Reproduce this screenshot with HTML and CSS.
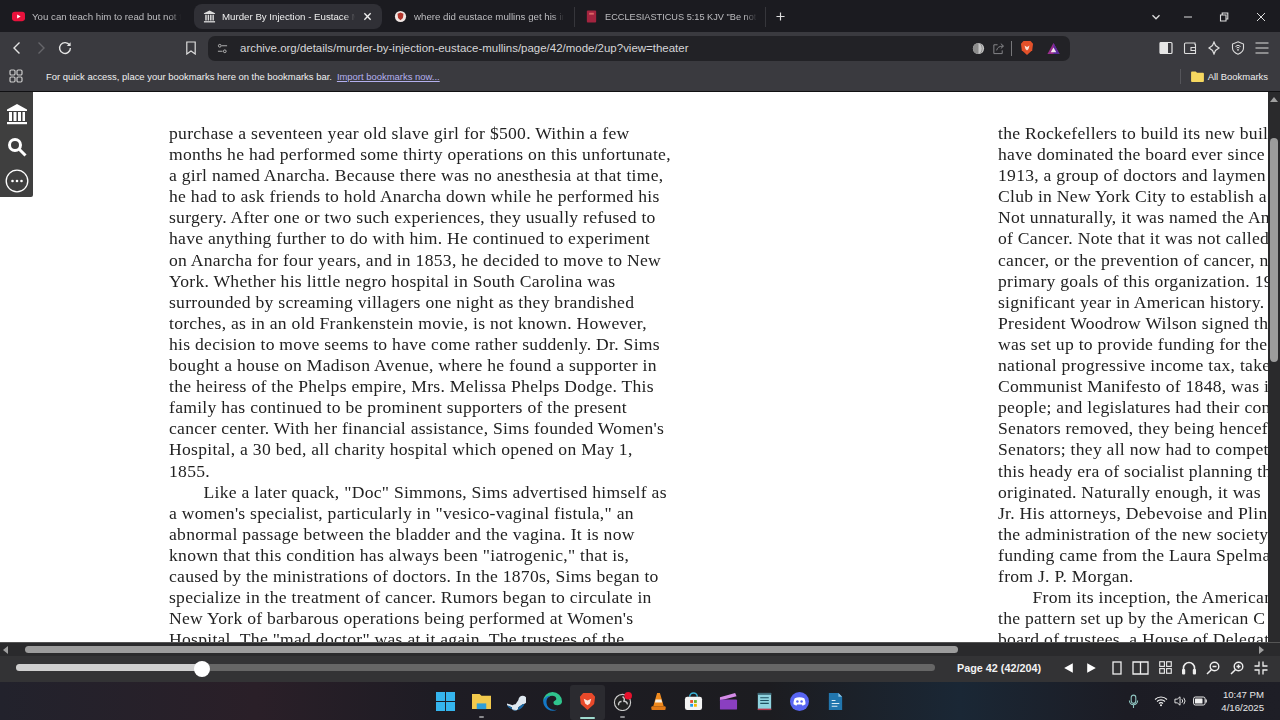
FILE: index.html
```html
<!DOCTYPE html>
<html lang="en">
<head>
<meta charset="utf-8">
<title>Murder By Injection - Eustace Mullins</title>
<link rel="stylesheet" href="styles.css">
</head>
<body>
<div class="tabstrip">
  <div class="tab tab-yt">
    <svg class="fav" viewBox="0 0 14 14"><rect x="0" y="2" width="14" height="10" rx="3" fill="#e8123c"/><path d="M5.5 4.8v4.4L9.3 7z" fill="#fff"/></svg>
    <span class="tab-title">You can teach him to read but not t</span>
  </div>
  <div class="tab tab-active">
    <svg class="fav" viewBox="0 0 14 14"><rect x="1" y="12" width="12" height="1.4" fill="#ddd"/><path d="M1 3.4 7 .6l6 2.8v1H1z" fill="#ddd"/><path d="M2.4 5h1.6v6.4H2.4zM5 5h1.6v6.4H5zM7.6 5h1.6v6.4H7.6zM10.2 5h1.5v6.4h-1.5z" fill="#ddd"/></svg>
    <span class="tab-title">Murder By Injection - Eustace M</span>
    <svg class="tab-close" viewBox="0 0 10 10"><path d="M1.5 1.5l7 7M8.5 1.5l-7 7" stroke="#eee" stroke-width="1.5"/></svg>
  </div>
  <div class="tab tab-leo">
    <svg class="fav" viewBox="0 0 14 14"><circle cx="7" cy="7" r="6" fill="#f1e7e4"/><path d="M7 2.6 10.2 4 9.6 8.6 7 11 4.4 8.6 3.8 4z" fill="#b3362c"/></svg>
    <span class="tab-title">where did eustace mullins get his in</span>
  </div>
  <div class="tab tab-bible">
    <svg class="fav" viewBox="0 0 14 14"><rect x="2" y="0.5" width="10" height="13" rx="1" fill="#a3243f"/><rect x="4.5" y="3" width="5" height="2" fill="#d66"/></svg>
    <span class="tab-title">ECCLESIASTICUS 5:15 KJV "Be not ig</span>
  </div>
  <svg class="new-tab" viewBox="0 0 10 10"><path d="M5 .5v9M.5 5h9" stroke="#ddd" stroke-width="1.3"/></svg>
  <div class="window-controls">
    <svg class="wc wc-chev" viewBox="0 0 10 10"><path d="M1.5 3.2 5 6.8l3.5-3.6" fill="none" stroke="#ddd" stroke-width="1.3"/></svg>
    <svg class="wc wc-min" viewBox="0 0 10 10"><path d="M1 5h8" stroke="#ddd" stroke-width="1"/></svg>
    <svg class="wc wc-max" viewBox="0 0 10 10"><path d="M1.5 3h5.5v6H1.5zM3.2 3V1h5.6v6H7" fill="none" stroke="#ddd" stroke-width="1.1"/></svg>
    <svg class="wc wc-x" viewBox="0 0 10 10"><path d="M1 1l8 8M9 1l-8 8" stroke="#ddd" stroke-width="1"/></svg>
  </div>
</div>

<div class="toolbar">
  <svg class="nav nav-back" viewBox="0 0 14 14"><path d="M9.5 1.5 4 7l5.5 5.5" fill="none" stroke="#e4e4e4" stroke-width="1.4"/></svg>
  <svg class="nav nav-fwd" viewBox="0 0 14 14"><path d="M4.5 1.5 10 7l-5.5 5.5" fill="none" stroke="#66666a" stroke-width="1.4"/></svg>
  <svg class="nav nav-reload" viewBox="0 0 14 14"><path d="M11.6 4.2A5.4 5.4 0 1 0 12.4 7" fill="none" stroke="#e4e4e4" stroke-width="1.4"/><path d="M12.6 1.2v3.9H8.8z" fill="#e4e4e4"/></svg>
  <svg class="nav nav-mark" viewBox="0 0 14 14"><path d="M2.8 1h8.4v12L7 10 2.8 13z" fill="none" stroke="#ddd" stroke-width="1.2"/></svg>
  <div class="urlbar">
    <svg class="tune" viewBox="0 0 12 12"><circle cx="3" cy="3" r="1.5" fill="none" stroke="#bbb"/><path d="M5 3h6M1 9h5" stroke="#bbb"/><circle cx="8.5" cy="9" r="1.5" fill="none" stroke="#bbb"/></svg>
    <span class="url">archive.org/details/murder-by-injection-eustace-mullins/page/42/mode/2up?view=theater</span>
    <svg class="u-ic u-globe" viewBox="0 0 14 14"><circle cx="7" cy="7" r="6" fill="#c6c6c6"/><path d="M7 1a6 6 0 0 0 0 12" fill="#8c8c8c"/><path d="M9 1.6a9 9 0 0 1 0 10.8" fill="none" stroke="#777" stroke-width=".8"/></svg>
    <svg class="u-ic u-share" viewBox="0 0 14 14"><path d="M6 3H2v9.500h9V9M5 9c.5-3 3-4.600 7-4.600M9.500 1.800 12.400 4.400 9.500 7" fill="none" stroke="#8d8d90" stroke-width="1"/></svg>
    <span class="u-div"></span>
    <svg class="u-ic u-brave" viewBox="0 0 14 16"><path d="M3.500 1h7l2.500 2.800-.8 6.400L7 15 1.800 10.200 1 3.800z" fill="#e2512a"/><path d="M4.500 5.500 7 7l2.500-1.500L8.500 9 7 10.500 5.500 9z" fill="#fbe2d6"/></svg>
    <svg class="u-ic u-rewards" viewBox="0 0 14 14"><path d="M7 1l6.500 12H.5z" fill="#9a2c8e"/><path d="M7 1l6.500 12H7z" fill="#5a2a9c"/><path d="M7 6l3 5H4z" fill="#f2e6ee"/></svg>
  </div>
  <svg class="tb-ic tb-side" viewBox="0 0 14 14"><rect x="1" y="1.500" width="12" height="11" rx="1" fill="none" stroke="#e6e6e6" stroke-width="1.2"/><rect x="1" y="1.500" width="8" height="11" fill="#e6e6e6"/></svg>
  <svg class="tb-ic tb-wallet" viewBox="0 0 14 14"><path d="M12 3.500V2H2.500A1 1 0 0 0 1.500 3v8.500a1 1 0 0 0 1 1h10v-9zM8 6.500h4.500v3H8z" fill="none" stroke="#ddd" stroke-width="1.100"/></svg>
  <svg class="tb-ic tb-leo" viewBox="0 0 14 14"><path d="M7 1l1.500 3.500L12 7 8.500 9.500 7 13 5.500 9.500 2 7l3.500-2.500z" fill="none" stroke="#ddd" stroke-width="1.200"/></svg>
  <svg class="tb-ic tb-vpn" viewBox="0 0 14 14"><path d="M7 .8 12.500 3v4c0 3-2.500 5-5.500 6.200C4 12 1.500 10 1.500 7V3z" fill="none" stroke="#ddd" stroke-width="1.100"/><path d="M4.500 5.500a3.500 3.500 0 0 1 5 0M5.600 7a2 2 0 0 1 2.800 0" fill="none" stroke="#ddd"/><circle cx="7" cy="8.800" r=".9" fill="#ddd"/></svg>
  <svg class="tb-ic tb-menu" viewBox="0 0 14 14"><path d="M.5 2h13M.5 7h13M.5 12h13" stroke="#ddd" stroke-width="1.100"/></svg>
</div>

<div class="bookmarks">
  <svg class="apps" viewBox="0 0 14 14"><g fill="none" stroke="#ccc" stroke-width="1.200"><rect x="1" y="1" width="5" height="5" rx="1.200"/><rect x="8" y="1" width="5" height="5" rx="1.200"/><rect x="1" y="8" width="5" height="5" rx="1.200"/><rect x="8" y="8" width="5" height="5" rx="1.200"/></g></svg>
  <span class="bm-text">For quick access, place your bookmarks here on the bookmarks bar.</span>
  <a class="bm-link">Import bookmarks now...</a>
  <span class="bm-div"></span>
  <svg class="folder" viewBox="0 0 14 12"><path d="M0 1.500A1 1 0 0 1 1 .5h4l1.500 1.500H13a1 1 0 0 1 1 1V11a1 1 0 0 1-1 1H1a1 1 0 0 1-1-1z" fill="#f6d860"/></svg>
  <span class="bm-all">All Bookmarks</span>
</div>

<main class="viewer">
  <div class="spread">
    <div class="page">
      <div class="ln">purchase a seventeen year old slave girl for $500. Within a few</div>
      <div class="ln">months he had performed some thirty operations on this unfortunate,</div>
      <div class="ln">a girl named Anarcha. Because there was no anesthesia at that time,</div>
      <div class="ln">he had to ask friends to hold Anarcha down while he performed his</div>
      <div class="ln">surgery. After one or two such experiences, they usually refused to</div>
      <div class="ln">have anything further to do with him. He continued to experiment</div>
      <div class="ln">on Anarcha for four years, and in 1853, he decided to move to New</div>
      <div class="ln">York. Whether his little negro hospital in South Carolina was</div>
      <div class="ln">surrounded by screaming villagers one night as they brandished</div>
      <div class="ln">torches, as in an old Frankenstein movie, is not known. However,</div>
      <div class="ln">his decision to move seems to have come rather suddenly. Dr. Sims</div>
      <div class="ln">bought a house on Madison Avenue, where he found a supporter in</div>
      <div class="ln">the heiress of the Phelps empire, Mrs. Melissa Phelps Dodge. This</div>
      <div class="ln">family has continued to be prominent supporters of the present</div>
      <div class="ln">cancer center. With her financial assistance, Sims founded Women's</div>
      <div class="ln">Hospital, a 30 bed, all charity hospital which opened on May 1,</div>
      <div class="ln">1855.</div>
      <div class="ln indent">Like a later quack, "Doc" Simmons, Sims advertised himself as</div>
      <div class="ln">a women's specialist, particularly in "vesico-vaginal fistula," an</div>
      <div class="ln">abnormal passage between the bladder and the vagina. It is now</div>
      <div class="ln">known that this condition has always been "iatrogenic," that is,</div>
      <div class="ln">caused by the ministrations of doctors. In the 1870s, Sims began to</div>
      <div class="ln">specialize in the treatment of cancer. Rumors began to circulate in</div>
      <div class="ln">New York of barbarous operations being performed at Women's</div>
      <div class="ln">Hospital. The "mad doctor" was at it again. The trustees of the</div>
    </div>
    <div class="page">
      <div class="ln">the Rockefellers to build its new buil</div>
      <div class="ln">have dominated the board ever since</div>
      <div class="ln">1913, a group of doctors and laymen</div>
      <div class="ln">Club in New York City to establish a</div>
      <div class="ln">Not unnaturally, it was named the Am</div>
      <div class="ln">of Cancer. Note that it was not called</div>
      <div class="ln">cancer, or the prevention of cancer, n</div>
      <div class="ln">primary goals of this organization. 19</div>
      <div class="ln">significant year in American history.</div>
      <div class="ln">President Woodrow Wilson signed th</div>
      <div class="ln">was set up to provide funding for the</div>
      <div class="ln">national progressive income tax, take</div>
      <div class="ln">Communist Manifesto of 1848, was i</div>
      <div class="ln">people; and legislatures had their con</div>
      <div class="ln">Senators removed, they being hencef</div>
      <div class="ln">Senators; they all now had to compet</div>
      <div class="ln">this heady era of socialist planning th</div>
      <div class="ln">originated. Naturally enough, it was</div>
      <div class="ln">Jr. His attorneys, Debevoise and Plin</div>
      <div class="ln">the administration of the new society</div>
      <div class="ln">funding came from the Laura Spelma</div>
      <div class="ln">from J. P. Morgan.</div>
      <div class="ln indent">From its inception, the American</div>
      <div class="ln">the pattern set up by the American C</div>
      <div class="ln">board of trustees, a House of Delegat</div>
    </div>
  </div>
  <div class="side-tools">
    <svg class="st st-arch" viewBox="0 0 22 22"><path d="M1 6.500 11 1l10 5.500v1.500H1z" fill="#fff"/><path d="M3 9h3v9H3zM7.500 9h3v9h-3zM12 9h3v9h-3zM16.500 9H19v9h-2.500z" fill="#fff"/><rect x="1" y="19" width="20" height="2.200" fill="#fff"/></svg>
    <svg class="st st-search" viewBox="0 0 20 20"><circle cx="8" cy="8" r="5.500" fill="none" stroke="#fff" stroke-width="3"/><path d="M12.500 12.500 18.500 18.500" stroke="#fff" stroke-width="3"/></svg>
    <svg class="st st-more" viewBox="0 0 24 24"><circle cx="12" cy="12" r="10.800" fill="none" stroke="#fff" stroke-width="1.300"/><circle cx="7.500" cy="12" r="1.300" fill="#fff"/><circle cx="12" cy="12" r="1.300" fill="#fff"/><circle cx="16.500" cy="12" r="1.300" fill="#fff"/></svg>
  </div>
  <div class="vscroll">
    <span class="v-arrow"></span>
    <span class="v-thumb"></span>
  </div>
</main>

<div class="hscroll">
  <span class="h-arrow h-left"></span>
  <span class="h-thumb"></span>
  <span class="h-arrow h-right"></span>
</div>

<div class="controls">
  <div class="slider"><span class="slider-fill"></span><span class="slider-knob"></span></div>
  <span class="page-label">Page 42 (42/204)</span>
  <svg class="c-ic c-prev" viewBox="0 0 12 14"><path d="M11 1.500v11L1 7z" fill="#fff"/></svg>
  <svg class="c-ic c-next" viewBox="0 0 12 14"><path d="M1 1.500v11L11 7z" fill="#fff"/></svg>
  <svg class="c-ic c-one" viewBox="0 0 10 14"><rect x="1" y="1" width="8" height="12" fill="none" stroke="#eee" stroke-width="1.300"/></svg>
  <svg class="c-ic c-two" viewBox="0 0 17 14"><path d="M1 1h15v12H1zM8.500 1v12" fill="none" stroke="#eee" stroke-width="1.300"/></svg>
  <svg class="c-ic c-grid" viewBox="0 0 14 14"><g fill="none" stroke="#eee" stroke-width="1.200"><rect x=".8" y=".8" width="5" height="5"/><rect x="8.200" y=".8" width="5" height="5"/><rect x=".8" y="8.200" width="5" height="5"/><rect x="8.200" y="8.200" width="5" height="5"/></g></svg>
  <svg class="c-ic c-audio" viewBox="0 0 16 14"><path d="M2.500 9V7a5.500 5.500 0 0 1 11 0v2" fill="none" stroke="#eee" stroke-width="1.600"/><rect x="1" y="8" width="3.200" height="5.500" rx="1" fill="#eee"/><rect x="11.800" y="8" width="3.200" height="5.500" rx="1" fill="#eee"/></svg>
  <svg class="c-ic c-zoomout" viewBox="0 0 14 14"><circle cx="8.500" cy="5.500" r="4.300" fill="none" stroke="#eee" stroke-width="1.400"/><path d="M5.300 8.700 1 13M6.500 5.500h4" stroke="#eee" stroke-width="1.500"/></svg>
  <svg class="c-ic c-zoomin" viewBox="0 0 14 14"><circle cx="8.500" cy="5.500" r="4.300" fill="none" stroke="#eee" stroke-width="1.400"/><path d="M5.300 8.700 1 13M6.500 5.500h4M8.500 3.500v4" stroke="#eee" stroke-width="1.500"/></svg>
  <svg class="c-ic c-full" viewBox="0 0 14 14"><path d="M5 .5V5H.5M9 .5V5h4.500M5 13.500V9H.5M9 13.500V9h4.500" fill="none" stroke="#eee" stroke-width="1.300"/></svg>
</div>

<footer class="taskbar">
  <div class="task-spacer"></div>
  <div class="task-apps">
    <span class="app"><svg viewBox="0 0 20 20"><path d="M0 0h9.500v9.500H0zM10.500 0H20v9.500h-9.500zM0 10.500h9.500V20H0zM10.500 10.500H20V20h-9.500z" fill="#35b5ee"/></svg></span>
    <span class="app"><svg viewBox="0 0 20 20"><path d="M0 2h8l2 2h10v14H0z" fill="#f2c94c"/><rect x="5" y="12" width="10" height="6" fill="#2f9fd8"/></svg><i class="dot"></i></span>
    <span class="app"><svg viewBox="0 0 20 20"><path d="M0 12 6 14a4 4 0 0 1 3-1l3-4.500a4.500 4.500 0 1 1 4.500 4.500L12 16a3.500 3.500 0 0 1-7 0l-5-2z" fill="#dfe8f0"/><path d="M0 14l5 2a3.500 3.500 0 0 0 7 0l4.500-3a4.500 4.500 0 0 0 2-1C17 16 14 19 9.500 19 5 19 1.500 17 0 14z" fill="#1a6aa8"/></svg></span>
    <span class="app"><svg viewBox="0 0 20 20"><path d="M10 0a10 10 0 0 1 10 10c0 3-3 4-5 4-3 0-4-1.500-4-3 0-2 3-2 3-4C14 4 9 3 6 5 3 7 1 9 .2 10A10 10 0 0 1 10 0z" fill="#2fc48d"/><path d="M.2 10C1 6 4 4 8 4c-4 2-5 5-4 9s6 7 11 5.500A10 10 0 0 1 .2 10z" fill="#1478c8"/></svg></span>
    <span class="app app-active"><svg viewBox="0 0 18 20"><path d="M4.500 1h9l3.500 4-1 7.500L9 19 2 12.500 1 5z" fill="#e8492a"/><path d="M5 7l4 2 4-2-1.500 5L9 14l-2.500-2z" fill="#fde7dc"/></svg><i class="bar"></i></span>
    <span class="app"><svg viewBox="0 0 20 20"><circle cx="10" cy="11" r="8.500" fill="#222" stroke="#ccc" stroke-width="1.200"/><path d="M10 5a3 3 0 0 1 1 5 3 3 0 0 1 4 3M6 14a3 3 0 0 1 3-4" fill="none" stroke="#ccc" stroke-width="1.500"/><circle cx="16" cy="4" r="4" fill="#e8112d"/></svg><i class="dot"></i></span>
    <span class="app"><svg viewBox="0 0 18 20"><path d="M7.500 1h3l4 14h-11z" fill="#f08a1d"/><path d="M6 8h6l.8 3H5.200z" fill="#f5efe6"/><rect x="1.500" y="15" width="15" height="4" rx="1" fill="#e27a16"/></svg></span>
    <span class="app"><svg viewBox="0 0 20 20"><path d="M6 5a4 4 0 0 1 8 0" fill="none" stroke="#39b4d8" stroke-width="1.500"/><rect x="1" y="5" width="18" height="14" rx="2.500" fill="#f4f4f4"/><path d="M6.500 8.500h3v3h-3z" fill="#e8502a"/><path d="M10.500 8.500h3v3h-3z" fill="#6cb52d"/><path d="M6.500 12.500h3v3h-3z" fill="#1e9be6"/><path d="M10.500 12.500h3v3h-3z" fill="#f6b900"/></svg></span>
    <span class="app"><svg viewBox="0 0 20 20"><path d="M1 5.500 17 1l1.500 3.500L1 9z" fill="#d58be8"/><rect x="1" y="8" width="18" height="10.500" rx="1" fill="#8a3fc0"/></svg></span>
    <span class="app"><svg viewBox="0 0 18 20"><rect x="2" y="1" width="14" height="18" fill="#8fd3df"/><rect x="2" y="17.500" width="14" height="1.500" fill="#b8344a"/><path d="M4.500 6h9M4.500 9h9M4.500 12h9" stroke="#1f5060" stroke-width="1.200"/><rect x="2" y="1" width="14" height="2" fill="#3f6b78"/></svg></span>
    <span class="app"><svg viewBox="0 0 20 20"><circle cx="10" cy="10" r="10" fill="#5865f2"/><path d="M5 6.500c3-1.300 7-1.300 10 0 1 2 1.500 4.500 1.300 6.500-1 .7-2 1.200-3 1.400l-.8-1.200h-5l-.8 1.200c-1-.2-2-.7-3-1.400C3.500 11 4 8.500 5 6.500z" fill="#fff"/><circle cx="7.800" cy="10" r="1.300" fill="#5865f2"/><circle cx="12.200" cy="10" r="1.300" fill="#5865f2"/></svg></span>
    <span class="app"><svg viewBox="0 0 16 20"><path d="M1 1h10l4 4v14H1z" fill="#2176ae"/><path d="M11 1l4 4h-4z" fill="#8cc4e4"/><path d="M4 9h4M4 12h8M4 15h6" stroke="#dcecf6" stroke-width="1.100"/></svg></span>
  </div>
  <div class="tray">
    <svg class="tr tr-mic" viewBox="0 0 12 16"><rect x="3.500" y="1" width="5" height="9" rx="2.500" fill="none" stroke="#8fc4c0" stroke-width="1.200"/><path d="M1.500 7a4.500 4.500 0 0 0 9 0M6 11.500V15" fill="none" stroke="#8fc4c0" stroke-width="1.200"/></svg>
    <svg class="tr tr-wifi" viewBox="0 0 14 12"><path d="M1 4.500a8.500 8.500 0 0 1 12 0M3 6.500a5.700 5.700 0 0 1 8 0M5 8.500a2.800 2.800 0 0 1 4 0" fill="none" stroke="#eee" stroke-width="1.100"/><circle cx="7" cy="10.300" r="1" fill="#eee"/></svg>
    <svg class="tr tr-vol" viewBox="0 0 14 12"><path d="M1 4h2.500L6.500 1.500v9L3.500 8H1z" fill="none" stroke="#eee"/><path d="M8.500 4a3 3 0 0 1 0 4M10.500 2.500a5.500 5.500 0 0 1 0 7" fill="none" stroke="#eee"/></svg>
    <svg class="tr tr-bat" viewBox="0 0 14 10"><rect x=".6" y="1" width="11.500" height="8" rx="1.800" fill="none" stroke="#eee"/><rect x="2" y="2.500" width="7.500" height="5" rx=".6" fill="#eee"/><rect x="12.600" y="3.500" width="1.200" height="3" fill="#eee"/></svg>
    <div class="clock"><span>10:47 PM</span><span>4/16/2025</span></div>
  </div>
</footer>
</body>
</html>
```
FILE: styles.css
```css
* { box-sizing: border-box; }
html, body { margin: 0; padding: 0; }
body {
  width: 1280px;
  height: 720px;
  overflow: hidden;
  display: flex;
  flex-direction: column;
  background: #1c1c22;
  font-family: "Liberation Sans", Arial, sans-serif;
  color: #ddd;
}
svg { display: block; flex: none; }

/* Tab strip */
.tabstrip {
  height: 32px;
  flex: none;
  display: flex;
  align-items: center;
  background: #1b1b20;
  padding-top: 1px;
}
.tab { height: 25px; display: flex; align-items: center; flex: none; font-size: 9.7px; color: #bdbdc0; }
.fav { width: 13px; height: 13px; flex: none; }
.tab-title {
  white-space: nowrap;
  margin-left: 7px;
  -webkit-mask-image: linear-gradient(to right, #000 92%, transparent);
  mask-image: linear-gradient(to right, #000 92%, transparent);
}
.tab-yt { width: 194px; padding-left: 12px; }
.tab-yt .tab-title { width: 149px; }
.tab-active { width: 188px; padding-left: 9px; background: #303036; border-radius: 8px; color: #eee; }
.tab-active .tab-title { width: 133px; margin-left: 6px; }
.tab-close { width: 9px; height: 9px; margin-left: 8px; }
.tab-leo { width: 193px; padding-left: 12px; border-right: 1px solid #36363b; height: 20px; }
.tab-leo .tab-title { width: 150px; }
.tab-bible { width: 191px; padding-left: 10px; border-right: 1px solid #36363b; height: 20px; }
.tab-bible .tab-title { width: 152px; margin-left: 7px; font-size: 9.2px; }
.new-tab { width: 9px; height: 9px; margin-left: 10px; }
.window-controls { margin-left: auto; display: flex; align-items: center; padding-right: 14px; }
.wc { width: 10px; height: 10px; }
.wc-min { margin-left: 22px; }
.wc-max { margin-left: 26px; }
.wc-x { margin-left: 27px; }

/* Toolbar */
.toolbar {
  height: 32px;
  flex: none;
  display: flex;
  align-items: center;
  background: #3a3a3f;
  padding-left: 10px;
}
.nav { width: 14px; height: 14px; }
.nav-fwd { margin-left: 10px; }
.nav-reload { margin-left: 10px; }
.nav-mark { margin-left: 112px; }
.urlbar {
  width: 862px;
  height: 25px;
  margin-left: 10px;
  background: #222226;
  border-radius: 7px;
  display: flex;
  align-items: center;
  padding-left: 9px;
}
.tune { width: 11px; height: 11px; }
.url { margin-left: 12px; font-size: 11.48px; color: #d6d6d8; white-space: nowrap; width: 732px; }
.u-ic { width: 13px; height: 13px; }
.u-share { margin-left: 7px; }
.u-div { width: 1px; height: 15px; background: #77777a; margin-left: 6px; }
.u-brave { margin-left: 8px; width: 14px; height: 16px; }
.u-rewards { margin-left: 13px; }
.tb-ic { width: 14px; height: 14px; }
.tb-side { margin-left: 89px; }
.tb-wallet, .tb-leo, .tb-vpn, .tb-menu { margin-left: 10px; }

/* Bookmarks bar */
.bookmarks {
  height: 28px;
  flex: none;
  display: flex;
  align-items: center;
  background: #3a3a3f;
  padding: 0 12px 4px 9px;
  font-size: 9.45px;
  box-shadow: inset 0 -1px 0 #101012;
}
.apps { width: 14px; height: 14px; }
.bm-text { margin-left: 23px; color: #f0f0f0; white-space: nowrap; }
.bm-link { margin-left: 5px; color: #b4b0ee; text-decoration: underline; white-space: nowrap; }
.bm-div { margin-left: auto; width: 1px; height: 15px; background: #55555a; }
.folder { width: 13px; height: 11px; margin-left: 10px; }
.bm-all { margin-left: 4px; color: #eee; white-space: nowrap; }

/* Reader */
.viewer {
  position: relative;
  flex: none;
  height: 550px;
  overflow: hidden;
  background: #fff;
}
.spread {
  display: grid;
  grid-template-columns: 829px 1fr;
  padding: 31px 12px 0 169px;
  height: 100%;
  overflow: hidden;
}
.page {
  min-width: 0;
  overflow: hidden;
  font-family: "Liberation Serif", "Times New Roman", serif;
  font-size: 17.6px;
  letter-spacing: 0.27px;
  line-height: 21.09px;
  color: #222;
  filter: blur(0.3px);
}
.ln { white-space: nowrap; }
.indent { padding-left: 34.5px; }

.side-tools {
  position: absolute;
  left: 0;
  top: 0;
  width: 33px;
  height: 105px;
  background: #3f3f3f;
  border-bottom-right-radius: 2px;
  display: flex;
  flex-direction: column;
  align-items: center;
}
.st-arch { width: 22px; height: 22px; margin-top: 11px; }
.st-search { width: 20px; height: 20px; margin-top: 12px; }
.st-more { width: 24px; height: 24px; margin-top: 12px; }

.vscroll {
  position: absolute;
  right: 0;
  top: 0;
  bottom: 0;
  width: 12px;
  background: #2a2a2c;
}
.v-arrow {
  position: absolute;
  left: 2px;
  top: 5px;
  border-left: 4px solid transparent;
  border-right: 4px solid transparent;
  border-bottom: 5px solid #a0a0a0;
}
.v-thumb {
  position: absolute;
  left: 2px;
  top: 46px;
  width: 8px;
  height: 224px;
  border-radius: 4px;
  background: #9c9c9c;
}

/* Horizontal scrollbar */
.hscroll {
  height: 14px;
  flex: none;
  display: flex;
  align-items: center;
  background: #2a2a2c;
  border-top: 1px solid #555;
  padding: 0 16px 0 3px;
}
.h-arrow { width: 0; height: 0; border-top: 4px solid transparent; border-bottom: 4px solid transparent; }
.h-left { border-right: 5px solid #a0a0a0; }
.h-right { border-left: 5px solid #a0a0a0; margin-left: auto; }
.h-thumb { width: 933px; height: 7px; border-radius: 4px; background: #9c9c9c; margin-left: 17px; }

/* Reader controls */
.controls {
  height: 26px;
  flex: none;
  display: flex;
  align-items: center;
  background: #333335;
  padding: 0 0 3px 16px;
}
.slider {
  position: relative;
  width: 919px;
  height: 7px;
  border-radius: 4px;
  background: #666;
  flex: none;
}
.slider-fill { position: absolute; left: 0; top: 0; bottom: 0; width: 186px; border-radius: 4px 0 0 4px; background: #cfcfcf; }
.slider-knob { position: absolute; left: 178px; top: -3.5px; width: 16px; height: 16px; border-radius: 50%; background: #fff; }
.page-label { margin-left: 22px; font-size: 10.8px; font-weight: 700; color: #f2f2f2; white-space: nowrap; width: 84px; }
.c-ic { width: 14px; height: 14px; }
.c-prev { width: 11px; height: 12px; margin-left: 22px; }
.c-next { width: 11px; height: 12px; margin-left: 12px; }
.c-one { width: 10px; height: 14px; margin-left: 15px; }
.c-two { width: 17px; height: 14px; margin-left: 10px; }
.c-grid { width: 13px; height: 13px; margin-left: 10px; }
.c-audio { width: 16px; margin-left: 9px; }
.c-zoomout { margin-left: 9px; }
.c-zoomin { margin-left: 10px; }
.c-full { margin-left: 10px; }

/* Taskbar */
.taskbar {
  flex: 1;
  min-height: 0;
  display: grid;
  grid-template-columns: 1fr auto 1fr;
  align-items: stretch;
  background: linear-gradient(90deg, #22222c 0%, #2a1f28 20%, #1e1c24 34%, #1c1c20 60%, #1a2735 75%, #1c1c24 88%, #1e1e26 100%);
}
.task-apps { display: flex; align-items: stretch; padding: 3px 0 0 1px; }
.app {
  position: relative;
  width: 35.400px;
  height: 35px;
  display: flex;
  align-items: center;
  justify-content: center;
  border-radius: 3px;
}
.app svg { width: 19px; height: 19px; margin-top: -2px; }
.app-active { background: #2b2b30; }
.dot { position: absolute; left: 15px; bottom: 2px; width: 5px; height: 2px; border-radius: 1px; background: #8a8a8e; }
.bar { position: absolute; left: 10px; bottom: 1px; width: 15px; height: 2px; border-radius: 1px; background: #9fdccf; }
.tray { display: flex; align-items: center; justify-content: flex-end; padding-right: 16px; }
.tr { flex: none; }
.tr-mic { width: 11px; height: 15px; margin-right: 15px; }
.tr-wifi { width: 14px; height: 12px; margin-right: 6px; }
.tr-vol { width: 13px; height: 12px; margin-right: 6px; }
.tr-bat { width: 14px; height: 10px; margin-right: 14px; }
.clock { display: flex; flex-direction: column; align-items: flex-end; font-size: 9.6px; line-height: 13px; color: #e8e8e8; }
```
